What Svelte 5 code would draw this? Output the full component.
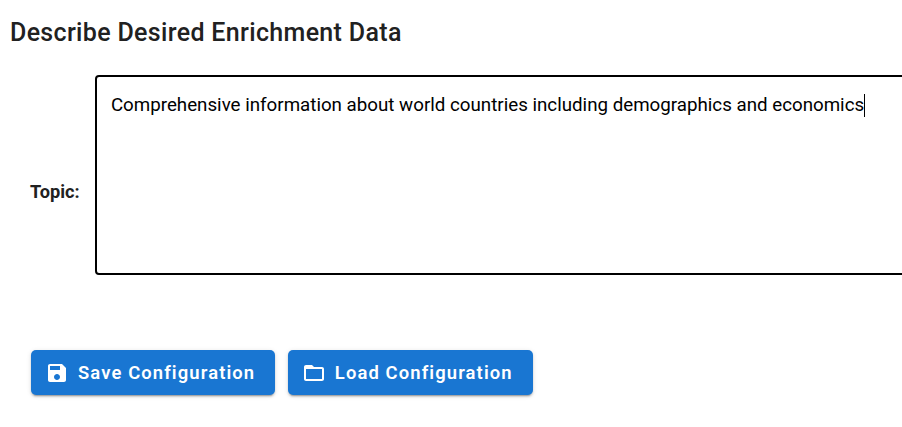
<script>
  const topic = "Comprehensive information about world countries including demographics and economics";
</script>

<div class="page">
  <h2>Describe Desired Enrichment Data</h2>

  <div class="field">
    <span class="label">Topic:</span>
    <div class="input">{topic}<span class="caret"></span></div>
  </div>

  <div class="actions">
    <button type="button">
      <svg viewBox="0 0 24 24" width="24" height="24" fill="currentColor">
        <path d="M17 3H5c-1.11 0-2 .9-2 2v14c0 1.1.89 2 2 2h14c1.1 0 2-.9 2-2V7l-4-4zm-5 16c-1.66 0-3-1.34-3-3s1.34-3 3-3 3 1.34 3 3-1.34 3-3 3zm3-10H5V5h10v4z" />
      </svg>
      Save Configuration
    </button>
    <button type="button">
      <svg viewBox="0 0 24 24" width="24" height="24" fill="currentColor">
        <path d="M20 6h-8l-2-2H4c-1.1 0-1.99.9-1.99 2L2 18c0 1.1.9 2 2 2h16c1.1 0 2-.9 2-2V8c0-1.1-.9-2-2-2zm0 12H4V8h16v10z" />
      </svg>
      Load Configuration
    </button>
  </div>
</div>

<style>
  :global(body) {
    margin: 0;
    background: #fff;
    overflow: hidden;
  }

  .page {
    font-family: Roboto, "Liberation Sans", sans-serif;
    height: 427px;
    box-sizing: border-box;
    padding: 18px 0 0 10px;
    color: #212121;
  }

  h2 {
    margin: 0;
    font-size: 25px;
    font-weight: 500;
    line-height: 29px;
    letter-spacing: 0.33px;
  }

  .field {
    display: flex;
    align-items: center;
    margin: 28px -20px 0 20px;
    gap: 16px;
  }

  .label {
    width: 49.4px;
    padding-top: 32px;
    font-size: 18.2px;
    font-weight: 700;
    white-space: nowrap;
  }

  .input {
    flex: 1;
    height: 200px;
    box-sizing: border-box;
    border: 2px solid #000;
    border-radius: 4px;
    padding: 16px 13px 16px 13.5px;
    font-size: 18.74px;
    line-height: 25px;
    color: #000;
  }

  .caret {
    display: inline-block;
    width: 1px;
    height: 23px;
    background: #000;
    vertical-align: -6px;
  }

  .actions {
    display: flex;
    gap: 12.6px;
    margin: 75px 0 0 21px;
  }

  button {
    display: flex;
    align-items: center;
    gap: 9px;
    height: 45px;
    padding: 0 20px 0 14px;
    border: 0;
    border-radius: 5px;
    background: #1976d2;
    color: #fff;
    font-family: inherit;
    font-size: 18.4px;
    font-weight: 600;
    letter-spacing: 1.12px;
    box-shadow: 0 3px 1px -2px rgba(0, 0, 0, 0.2), 0 2px 2px 0 rgba(0, 0, 0, 0.14), 0 1px 5px 0 rgba(0, 0, 0, 0.12);
  }
</style>
